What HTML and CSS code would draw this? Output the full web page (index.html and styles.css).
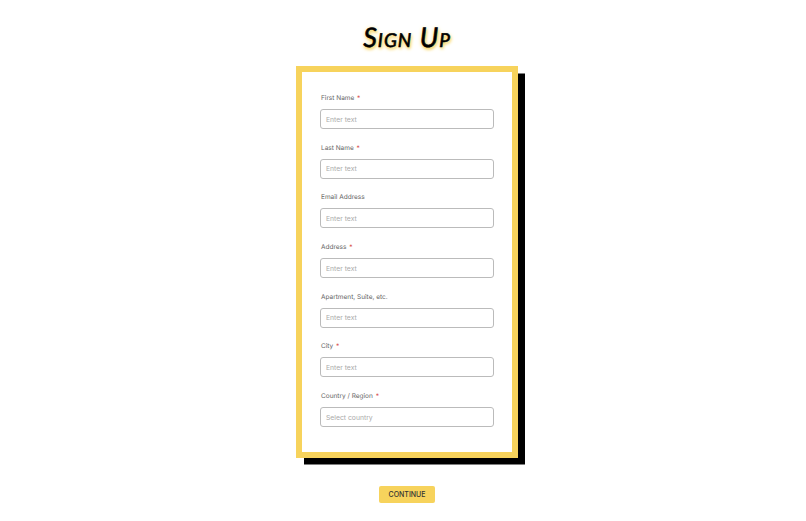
FILE: index.html
```html
<!DOCTYPE html>
<html lang="en">
<head>
    <meta charset="UTF-8" />
    <title>Sign Up</title>
    <link rel="stylesheet" href="styles.css">
</head>
<body>
<h1 class="title">Sign Up</h1>
<form class="card">
    <div class="form-group">
        <label for="firstName">First Name <span class="required">*</span></label>
        <input type="text" id="firstName" placeholder="Enter text" />
    </div>
    <div class="form-group">
        <label for="lastName">Last Name <span class="required">*</span></label>
        <input type="text" id="lastName" placeholder="Enter text" />
    </div>
    <div class="form-group">
        <label for="email">Email Address</label>
        <input type="text" id="email" placeholder="Enter text" />
    </div>
    <div class="form-group">
        <label for="address">Address <span class="required">*</span></label>
        <input type="text" id="address" placeholder="Enter text" />
    </div>
    <div class="form-group">
        <label for="apartment">Apartment, Suite, etc.</label>
        <input type="text" id="apartment" placeholder="Enter text" />
    </div>
    <div class="form-group">
        <label for="city">City <span class="required">*</span></label>
        <input type="text" id="city" placeholder="Enter text" />
    </div>
    <div class="form-group">
        <label for="country">Country / Region <span class="required">*</span></label>
        <input type="text" id="country" placeholder="Select country" />
    </div>
</form>
<button class="continue" type="button">CONTINUE</button>
</body>
</html>
```

FILE: styles.css
```css
body {
    margin: 0;
    padding: 23px 0 0 8px;
    display: flex;
    flex-direction: column;
    align-items: center;
    background-color: #fff;
    font-family: Inter, "Liberation Sans", sans-serif;
    text-rendering: geometricPrecision;
}
.title {
    margin: 0 0 16px;
    height: 27px;
    font-family: Lato, sans-serif;
    font-size: 27px;
    line-height: 27px;
    font-weight: 400;
    font-style: italic;
    font-variant: small-caps;
    letter-spacing: 1px;
    color: #000;
    -webkit-text-stroke: 0.6px #000;
    text-shadow: 0 1px 4px #f7d35c, 1px 2px 3px #f7d35c;
}
.card {
    box-sizing: border-box;
    width: 222px;
    height: 392px;
    padding: 19px 18px 0;
    display: flex;
    flex-direction: column;
    gap: 11.7px;
    background-color: #fff;
    border: 6px solid #f7d35c;
    box-shadow: 7.5px 7px 0 -0.5px #000;
}
.form-group {
    display: flex;
    flex-direction: column;
}
label {
    height: 14px;
    margin: 0 0 4px 1px;
    font-size: 6.5px;
    line-height: 14px;
    color: #666;
}
.required {
    margin-left: 1px;
    color: #d9534f;
}
input[type="text"] {
    box-sizing: border-box;
    width: 174px;
    height: 20px;
    padding: 0 5px;
    background-color: #fff;
    border: 1px solid #bbb;
    border-radius: 3px;
    font-family: inherit;
    font-size: 6.8px;
    outline: none;
}
input::placeholder {
    color: #aaa;
}
.continue {
    width: 56px;
    height: 17px;
    margin-top: 28px;
    padding: 0;
    background-color: #f7d35c;
    color: #333;
    border: none;
    border-radius: 2px;
    font-family: inherit;
    font-size: 7px;
    font-weight: 500;
}
```
